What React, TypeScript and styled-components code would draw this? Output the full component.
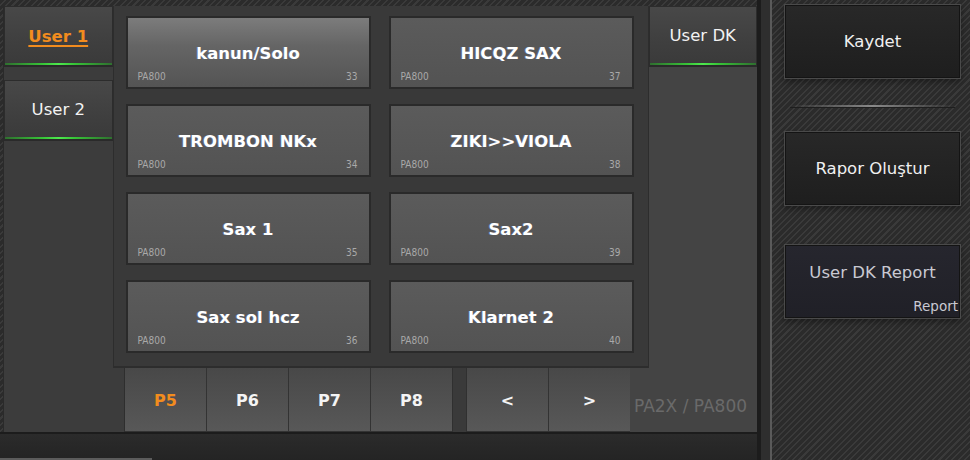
import React from 'react';
import styled, { createGlobalStyle } from 'styled-components';

const GlobalStyle = createGlobalStyle`
  html, body {
    margin: 0;
    padding: 0;
    background: #262626;
  }
  * {
    box-sizing: border-box;
  }
`;

const stripes = `repeating-linear-gradient(135deg, #2b2b2b 0px, #2b2b2b 3px, #3a3a3a 3px, #3a3a3a 4.5px)`;

const Page = styled.div`
  width: 970px;
  height: 460px;
  display: flex;
  background: ${stripes};
  font-family: "DejaVu Sans", Verdana, sans-serif;
  overflow: hidden;
`;

const MainArea = styled.div`
  width: 757px;
  display: flex;
  flex-direction: column;
`;

const TopStrip = styled.div`
  height: 6px;
`;

const Panel = styled.div`
  height: 426px;
  margin-left: 3px;
  display: flex;
  flex-direction: column;
  background: #3c3c3c;
  border-left: 1px solid #2a2a2a;
`;

const TopRow = styled.div`
  height: 362px;
  display: flex;
`;

const SideColumn = styled.div<{ $bg: string }>`
  width: 109px;
  display: flex;
  flex-direction: column;
  gap: 13px;
  background: ${p => p.$bg};
`;

const Tab = styled.div<{ $active?: boolean }>`
  height: 61px;
  display: flex;
  align-items: center;
  justify-content: center;
  position: relative;
  background: linear-gradient(180deg, #484848 0%, #3f3f3f 60%, #3a3a3a 100%);
  border: 1px solid #2c2c2c;
  border-bottom: 2px solid #2a2a2a;
  color: ${p => (p.$active ? '#f28c1e' : '#f2f2f2')};
  font-size: ${p => (p.$active ? '16.5px' : '16.5px')};
  font-weight: ${p => (p.$active ? 700 : 400)};
  text-decoration: ${p => (p.$active ? 'underline' : 'none')};
  text-underline-offset: 3px;
  text-decoration-thickness: 2px;
  padding-bottom: ${p => (p.$active ? '0px' : '2px')};

  &::after {
    content: '';
    position: absolute;
    left: 0;
    right: 0;
    bottom: 0;
    height: 2px;
    background: linear-gradient(90deg, #2f6f2f 0%, #37c437 35%, #4ee84e 50%, #37c437 65%, #2f6f2f 100%);
  }
`;

const GridPanel = styled.div`
  width: 536px;
  background: #393939;
  border-left: 1px solid #2d2d2d;
  border-right: 1px solid #2d2d2d;
  border-bottom: 2px solid #2d2d2d;
  padding: 10px 14px 12px 12px;
  display: grid;
  grid-template-columns: 245px 245px;
  grid-template-rows: repeat(4, 73px);
  column-gap: 18px;
  row-gap: 15px;
`;

const Preset = styled.div<{ $lit?: boolean }>`
  display: grid;
  grid-template-rows: 1fr auto 1fr;
  border: 2px solid #2a2a2a;
  background: ${p =>
    p.$lit
      ? 'linear-gradient(180deg, #7c7c7c 0%, #656565 40%, #545454 100%)'
      : 'linear-gradient(180deg, #5b5b5b 0%, #575757 50%, #535353 100%)'};
  color: #ffffff;
`;

const PresetTitle = styled.div`
  grid-row: 2;
  text-align: center;
  font-size: 16.5px;
  font-weight: 700;
  line-height: 20px;
  padding-top: 2px;
  text-shadow: -1px 0 0 rgba(120, 160, 255, 0.35);
`;

const PresetMeta = styled.div`
  grid-row: 3;
  align-self: end;
  display: flex;
  justify-content: space-between;
  padding: 0 11px 5px 10px;
  font-family: "Liberation Sans Narrow", "DejaVu Sans Condensed", sans-serif;
  font-size: 10px;
  line-height: 11px;
  color: #a9a9a9;
`;

const BottomRow = styled.div`
  height: 64px;
  display: flex;
`;

const BottomFill = styled.div`
  width: 121px;
  background: #3c3c3c;
  border-right: 1px solid #2e2e2e;
`;

const PageButtons = styled.div`
  display: flex;
  gap: 1px;
  background: #333333;
`;

const PageButton = styled.div<{ $active?: boolean }>`
  width: 81px;
  height: 64px;
  display: flex;
  align-items: center;
  justify-content: center;
  background: linear-gradient(180deg, #484848 0%, #505050 50%, #585858 100%);
  border-bottom: 1px solid #333;
  color: ${p => (p.$active ? '#f28c1e' : '#f4f4f4')};
  font-size: 16px;
  font-weight: 700;
  padding-top: 2px;
`;

const PageSpacer = styled.div`
  width: 15px;
  background: #3a3a3a;
  border-left: 1px solid #303030;
  border-right: 1px solid #303030;
`;

const ModelLabel = styled.div`
  flex: 1;
  background: #444444;
  display: flex;
  align-items: center;
  padding: 11px 0 0 4px;
  color: #6a6a6a;
  font-size: 17px;
  white-space: nowrap;
`;

const Footer = styled.div`
  flex: 1;
  display: flex;
  flex-direction: column;
  justify-content: flex-end;
  background: linear-gradient(180deg, #2b2b2b 0%, #242424 100%);
  border-top: 2px solid #1c1c1c;
`;

const FooterLine = styled.div`
  width: 152px;
  height: 2px;
  background: #5c5c5c;
`;

const Divider = styled.div`
  width: 15px;
  background: linear-gradient(90deg, #1c1c1c 0px, #1c1c1c 4px, #2e2e2e 4px, #2e2e2e 13px, #5a5a5a 13px);
`;

const Sidebar = styled.div`
  flex: 1;
  padding: 4px 0 0 12px;
  display: flex;
  flex-direction: column;
`;

const SideButton = styled.div<{ $tone?: 'report' }>`
  width: 177px;
  height: 75px;
  display: flex;
  flex-direction: column;
  border: 1px solid #4a4a4a;
  box-shadow: inset 0 0 0 1px #141414, 0 3px 6px rgba(0, 0, 0, 0.35);
  background: ${p =>
    p.$tone === 'report'
      ? 'linear-gradient(180deg, #26262e 0%, #202027 100%)'
      : 'linear-gradient(180deg, #282828 0%, #1e1e1e 100%)'};
  color: ${p => (p.$tone === 'report' ? '#c9c9d2' : '#f0f0f0')};
`;

const SideLabel = styled.div`
  flex: 1;
  display: flex;
  align-items: center;
  justify-content: center;
  font-size: 16.5px;
`;

const SideSub = styled.div`
  text-align: right;
  padding: 0 2px 4px 0;
  font-size: 13.5px;
  line-height: 15px;
  color: #c9c9d2;
`;

const Separator = styled.div`
  height: 2px;
  width: 165px;
  margin: 26px 0 24px 6px;
  background: linear-gradient(90deg, rgba(140, 140, 140, 0) 0%, #8a8a8a 50%, rgba(140, 140, 140, 0) 100%);
  box-shadow: 0 1px 0 #1e1e1e;
`;

const Gap = styled.div`
  height: 38px;
`;

const presets = [
  { name: 'kanun/Solo', no: 33, lit: true },
  { name: 'HICQZ SAX', no: 37 },
  { name: 'TROMBON NKx', no: 34 },
  { name: 'ZIKI>>VIOLA', no: 38 },
  { name: 'Sax 1', no: 35 },
  { name: 'Sax2', no: 39 },
  { name: 'Sax sol hcz', no: 36 },
  { name: 'Klarnet 2', no: 40 },
];

export default function App() {
  return (
    <>
      <GlobalStyle />
      <Page>
        <MainArea>
          <TopStrip />
          <Panel>
            <TopRow>
              <SideColumn $bg="#3c3c3c">
                <Tab $active>User 1</Tab>
                <Tab>User 2</Tab>
              </SideColumn>
              <GridPanel>
                {presets.map(p => (
                  <Preset key={p.no} $lit={p.lit}>
                    <PresetTitle>{p.name}</PresetTitle>
                    <PresetMeta>
                      <span>PA800</span>
                      <span>{p.no}</span>
                    </PresetMeta>
                  </Preset>
                ))}
              </GridPanel>
              <SideColumn $bg="#444444">
                <Tab>User DK</Tab>
              </SideColumn>
            </TopRow>
            <BottomRow>
              <BottomFill />
              <PageButtons>
                <PageButton $active>P5</PageButton>
                <PageButton>P6</PageButton>
                <PageButton>P7</PageButton>
                <PageButton>P8</PageButton>
              </PageButtons>
              <PageSpacer />
              <PageButtons>
                <PageButton>&lt;</PageButton>
                <PageButton>&gt;</PageButton>
              </PageButtons>
              <ModelLabel>PA2X / PA800</ModelLabel>
            </BottomRow>
          </Panel>
          <Footer>
            <FooterLine />
          </Footer>
        </MainArea>
        <Divider />
        <Sidebar>
          <SideButton>
            <SideLabel>Kaydet</SideLabel>
          </SideButton>
          <Separator />
          <SideButton>
            <SideLabel>Rapor Oluştur</SideLabel>
          </SideButton>
          <Gap />
          <SideButton $tone="report">
            <SideLabel>User DK Report</SideLabel>
            <SideSub>Report</SideSub>
          </SideButton>
        </Sidebar>
      </Page>
    </>
  );
}
